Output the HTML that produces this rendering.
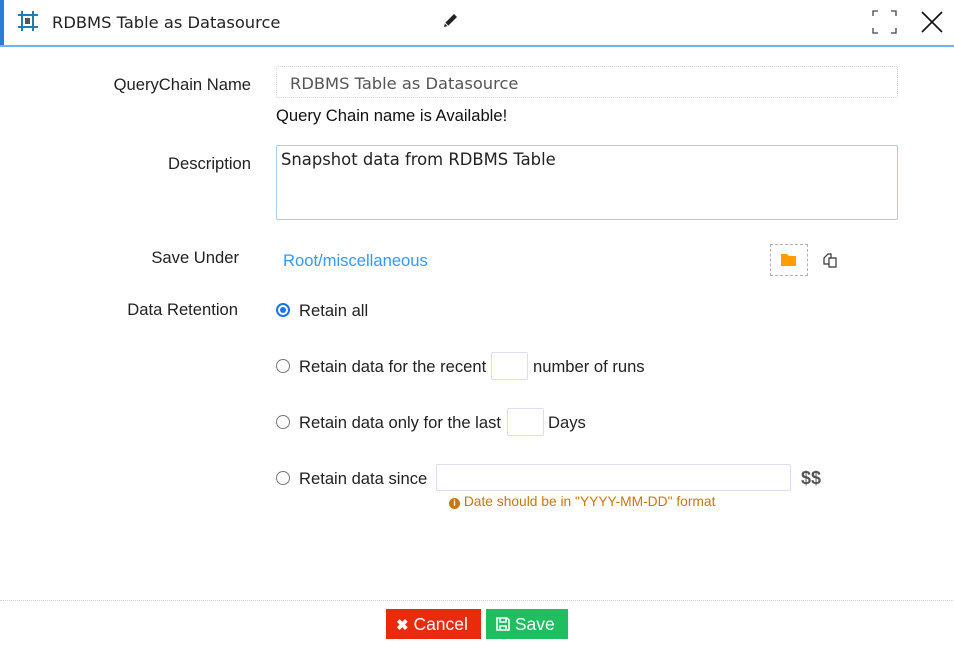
<!DOCTYPE html>
<html><head><meta charset="utf-8"><style>
*{margin:0;padding:0;box-sizing:border-box}
body{width:954px;height:648px;background:#fff;position:relative;overflow:hidden;font-family:"Liberation Sans",Arial,sans-serif;font-size:16.6px;color:#222}
.a{position:absolute;white-space:nowrap}
.lbl{position:absolute;text-align:right;white-space:nowrap}
.radio{position:absolute;left:276px;width:14px;height:14px;border:1px solid #777;border-radius:50%;background:#fff}
.box{position:absolute;border:1px solid #dcdcf4;border-radius:2px}
</style></head><body>
<div class="a" style="left:0;top:0;width:4px;height:46px;background:#2a7bd6"></div>
<div class="a" style="left:0;top:45px;width:954px;height:2px;background:#6cb4f4"></div>
<svg class="a" style="left:17px;top:9px" width="22" height="24" viewBox="0 0 22 24">
<g stroke="#1e7fb5" stroke-width="2"><line x1="5" y1="2" x2="5" y2="22"/><line x1="16" y1="2" x2="16" y2="22"/><line x1="1" y1="6" x2="21" y2="6"/><line x1="1" y1="18" x2="21" y2="18"/></g>
<rect x="8" y="9" width="5" height="6" fill="#555"/></svg>
<div class="a" style="left:52px;top:13px;font-family:'DejaVu Sans',sans-serif;font-size:16.3px;color:#222">RDBMS Table as Datasource</div>
<svg class="a" style="left:442px;top:12px" width="17" height="17" viewBox="0 0 17 17"><path d="M2 15 L3 11 L12 2 L15 5 L6 14 Z" fill="#222"/><path d="M3 11 L6 14" stroke="#fff" stroke-width="1"/></svg>
<svg class="a" style="left:872px;top:10px" width="25" height="24" viewBox="0 0 25 24" fill="none" stroke="#444" stroke-width="1.3"><path d="M1 6V1H6M19 1H24V6M24 18V23H19M6 23H1V18"/></svg>
<svg class="a" style="left:920px;top:10px" width="24" height="24" viewBox="0 0 24 24" stroke="#111" stroke-width="1.6"><path d="M2 2L22 22M22 2L2 22"/></svg>

<div class="lbl" style="right:703px;top:75px">QueryChain Name</div>
<div class="box" style="left:276px;top:66px;width:622px;height:32px;border:1px dotted #cfd0f0"></div>
<div class="a" style="left:290px;top:74px;font-family:'DejaVu Sans',sans-serif;font-size:16.3px;color:#555">RDBMS Table as Datasource</div>
<div class="a" style="left:276px;top:106px;color:#111">Query Chain name is Available!</div>

<div class="lbl" style="right:703px;top:154px">Description</div>
<div class="box" style="left:276px;top:145px;width:622px;height:75px;border:1px solid #aacdef"></div>
<div class="a" style="left:281px;top:150px;font-family:'DejaVu Sans',sans-serif;font-size:16.4px;color:#222">Snapshot data from RDBMS Table</div>

<div class="lbl" style="right:715px;top:248px">Save Under</div>
<div class="a" style="left:283px;top:251px;color:#3399ff">Root/miscellaneous</div>
<div class="a" style="left:770px;top:244px;width:38px;height:32px;border:1px dashed #b0b0c8"></div>
<svg class="a" style="left:781px;top:253px" width="16" height="14" viewBox="0 0 16 14"><path d="M0 1H6L8 3H15V13H0Z" fill="#ff9c00"/></svg>
<svg class="a" style="left:822px;top:252px" width="17" height="17" viewBox="0 0 17 17" fill="#fff" stroke="#333" stroke-width="1.2"><path d="M2 6L6 2H9V12H2Z"/><path d="M7 6H14V15H7Z"/></svg>

<div class="lbl" style="right:716px;top:300px">Data Retention</div>
<div class="radio" style="top:303px;border:2px solid #1a73e8"><div style="position:absolute;left:2px;top:2px;width:6px;height:6px;border-radius:50%;background:#1a73e8"></div></div>
<div class="a" style="left:299px;top:301px">Retain all</div>
<div class="radio" style="top:359px"></div>
<div class="a" style="left:299px;top:357px">Retain data for the recent</div>
<div class="box" style="left:491px;top:352px;width:37px;height:28px"></div>
<div class="a" style="left:533px;top:357px">number of runs</div>
<div class="radio" style="top:415px"></div>
<div class="a" style="left:299px;top:413px">Retain data only for the last</div>
<div class="box" style="left:507px;top:408px;width:37px;height:28px"></div>
<div class="a" style="left:548px;top:413px">Days</div>
<div class="radio" style="top:471px"></div>
<div class="a" style="left:299px;top:469px">Retain data since</div>
<div class="box" style="left:436px;top:464px;width:355px;height:27px"></div>
<div class="a" style="left:801px;top:468px;font-weight:bold;font-size:18px;color:#555">$$</div>
<div class="a" style="left:449px;top:494px;font-size:13.8px;color:#c8780f"><span style="display:inline-block;width:11px;height:11px;border-radius:50%;background:#c8780f;color:#fff;font-size:9px;text-align:center;line-height:11px;font-weight:bold;vertical-align:0px">i</span> Date should be in "YYYY-MM-DD" format</div>

<div class="a" style="left:0;top:600px;width:954px;height:0;border-top:1px dotted #cfd0f0"></div>
<div class="a" style="left:386px;top:609px;width:95px;height:30px;background:#ea2a0c;color:#fff;font-size:17.5px;line-height:30px;padding-left:10px"><span style="font-weight:bold;font-size:15px">✖</span> Cancel</div>
<div class="a" style="left:486px;top:609px;width:82px;height:30px;background:#1fbf5f;color:#fff;font-size:17.5px;line-height:30px;padding-left:10px">
<svg width="14" height="14" viewBox="0 0 14 14" style="vertical-align:-1px" fill="none" stroke="#fff" stroke-width="1.6"><path d="M1 1H11L13 3V13H1Z"/><path d="M4 1V5H10V1M4 13V9H10V13"/></svg> Save</div>
</body></html>
